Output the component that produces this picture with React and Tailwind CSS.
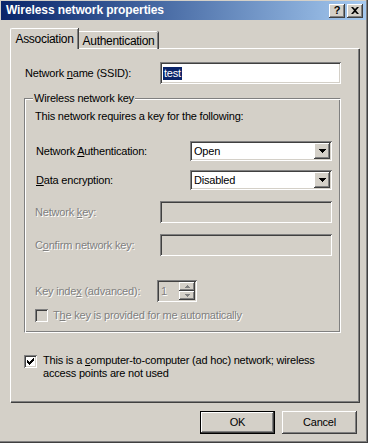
import React from 'react';

const sunken =
  'shadow-[inset_1px_1px_0_#808080,inset_-1px_-1px_0_#ffffff,inset_2px_2px_0_#404040,inset_-2px_-2px_0_#d4d0c8]';
const raised =
  'shadow-[inset_-1px_-1px_0_#404040,inset_1px_1px_0_#ffffff,inset_-2px_-2px_0_#808080,inset_2px_2px_0_#d4d0c8]';
const dis = 'text-[#808080] [text-shadow:1px_1px_0_#ffffff]';

function Arrow({ up, size = 'small' }) {
  const big = size === 'big';
  return (
    <svg width={big ? 7 : 5} height={big ? 4 : 3} viewBox={big ? '0 0 7 4' : '0 0 5 3'}>
      {big ? (
        <path d="M0 0h7v1h-1v1h-1v1h-1v1h-1v-1h-1v-1h-1v-1h-1z" fill="#000" />
      ) : up ? (
        <path d="M2 0h1v1h1v1h1v1h-5v-1h1v-1h1z" fill="#808080" />
      ) : (
        <path d="M0 0h5v1h-1v1h-1v1h-1v-1h-1v-1h-1z" fill="#808080" />
      )}
    </svg>
  );
}

function Combo({ value }) {
  return (
    <div className={`w-[142px] h-[20px] bg-white ${sunken} flex items-center p-[2px]`}>
      <span className="flex-1 pl-[2px] text-black">{value}</span>
      <div className={`w-[16px] h-[16px] bg-[#d4d0c8] ${raised} flex items-center justify-center`}>
        <Arrow size="big" />
      </div>
    </div>
  );
}

function Check({ checked, disabled }) {
  return (
    <div
      className={`w-[13px] h-[13px] ${disabled ? 'bg-[#d4d0c8]' : 'bg-white'} ${sunken} flex items-center justify-center shrink-0`}
    >
      {checked && (
        <svg width="7" height="7" viewBox="0 0 7 7">
          <path d="M0 2h1v1h1v1h1v-1h1v-1h1v-1h1v-1h1v3h-1v1h-1v1h-1v1h-1v1h-1v-1h-1v-1h-1v-1h-1z" fill="#000" />
        </svg>
      )}
    </div>
  );
}

export default function App() {
  return (
    <div
      className="w-[368px] h-[443px] bg-[#d4d0c8] flex flex-col text-[11px] leading-[13px] tracking-[-0.2px] text-black overflow-hidden shadow-[inset_-1px_-1px_0_#404040,inset_-2px_-2px_0_#808080]"
      style={{ fontFamily: '"Liberation Sans", Arial, sans-serif' }}
    >
      {/* title bar */}
      <div className="mt-[1px] ml-[1px] mr-[2px] h-[19px] bg-gradient-to-r from-[#0a246a] to-[#a6caf0] flex items-center justify-between pl-[5px] pr-[3px]">
        <span className="text-white font-bold text-[12px] tracking-[-0.1px]">Wireless network properties</span>
        <div className="flex">
          <div className={`w-[16px] h-[14px] bg-[#d4d0c8] ${raised} flex items-center justify-center font-bold text-[11px] leading-none`}>
            ?
          </div>
          <div className={`ml-[2px] w-[16px] h-[14px] bg-[#d4d0c8] ${raised} flex items-center justify-center`}>
            <svg width="8" height="7" viewBox="0 0 8 7">
              <path d="M0 0h2l2 2 2-2h2l-3 3.5 3 3.5h-2l-2-2-2 2h-2l3-3.5z" fill="#000" />
            </svg>
          </div>
        </div>
      </div>

      {/* tabs */}
      <div className="mt-[8px] pl-[10px] flex items-end relative z-10 -mb-[1px] text-[12px] tracking-[-0.3px]">
        <div className="h-[21px] w-[68px] bg-[#d4d0c8] border-l border-t border-white rounded-tl-[2px] shadow-[inset_-1px_0_0_#808080,1px_0_0_#404040] flex items-start justify-center pt-[4px]">
          Association
        </div>
        <div className="h-[18px] w-[79px] ml-[1px] border-t border-white rounded-tr-[2px] shadow-[inset_-1px_0_0_#808080,1px_0_0_#404040] flex items-start justify-center pt-[3px]">
          Authentication
        </div>
      </div>

      {/* panel */}
      <div className="ml-[10px] w-[349px] h-[354px] border-l border-t border-white shadow-[inset_-1px_-1px_0_#808080,1px_1px_0_#404040] pt-[13px] pl-[14px]">
        <div className="flex items-center">
          <span className="w-[135px]">
            Network <u>n</u>ame (SSID):
          </span>
          <div className={`w-[181px] h-[22px] bg-white ${sunken} flex items-center pl-[3px]`}>
            <span className="bg-[#0a246a] text-white px-[1px]">test</span>
          </div>
        </div>

        {/* group box */}
        <div className="relative mt-[14px] -ml-[1px] w-[317px] h-[235px] border border-t-[#808080] border-l-[#808080] border-r-white border-b-white shadow-[inset_1px_1px_0_#ffffff,inset_-1px_-1px_0_#808080] pt-[10px] pl-[10px]">
          <span className="absolute -top-[7px] left-[8px] px-[1px] bg-[#d4d0c8]">Wireless network key</span>
          <div className="mt-[1px]">This network requires a key for the following:</div>

          <div className="flex items-center mt-[18px]">
            <span className="w-[155px] pl-[1px]">
              Network <u>A</u>uthentication:
            </span>
            <Combo value="Open" />
          </div>
          <div className="flex items-center mt-[9px]">
            <span className="w-[155px] pl-[1px]">
              <u>D</u>ata encryption:
            </span>
            <Combo value="Disabled" />
          </div>

          <div className="flex items-center mt-[11px]">
            <span className={`w-[125px] ${dis}`}>
              Network <u>k</u>ey:
            </span>
            <div className={`w-[172px] h-[22px] ${sunken}`} />
          </div>
          <div className="flex items-center mt-[11px]">
            <span className={`w-[125px] ${dis}`}>
              C<u>o</u>nfirm network key:
            </span>
            <div className={`w-[172px] h-[22px] ${sunken}`} />
          </div>

          <div className="flex items-center mt-[24px]">
            <span className={`w-[122px] ${dis}`}>
              Key inde<u>x</u> (advanced):
            </span>
            <div className={`w-[40px] h-[22px] ${sunken} flex items-center p-[2px]`}>
              <span className={`flex-1 pl-[2px] ${dis}`}>1</span>
              <div className="flex flex-col w-[16px] h-[18px]">
                <div className={`h-[9px] ${raised} flex items-center justify-center`}>
                  <Arrow up />
                </div>
                <div className={`h-[9px] ${raised} flex items-center justify-center`}>
                  <Arrow />
                </div>
              </div>
            </div>
          </div>
          <div className="flex items-center mt-[7px]">
            <Check disabled />
            <span className={`ml-[5px] ${dis}`}>
              T<u>h</u>e key is provided for me automatically
            </span>
          </div>
        </div>

        <div className="flex items-start mt-[21px] -ml-[1px]">
          <div className="mt-[1px]">
            <Check checked />
          </div>
          <span className="ml-[6px] w-[285px]">
            This is a <u>c</u>omputer-to-computer (ad hoc) network; wireless access points are not used
          </span>
        </div>
      </div>

      {/* buttons */}
      <div className="mt-[9px] flex justify-end pr-[11px] gap-[7px]">
        <div className="w-[75px] h-[23px] border border-black bg-[#d4d0c8] flex">
          <div className={`flex-1 ${raised} flex items-center justify-center`}>OK</div>
        </div>
        <div className={`w-[75px] h-[23px] ${raised} flex items-center justify-center`}>Cancel</div>
      </div>
    </div>
  );
}
